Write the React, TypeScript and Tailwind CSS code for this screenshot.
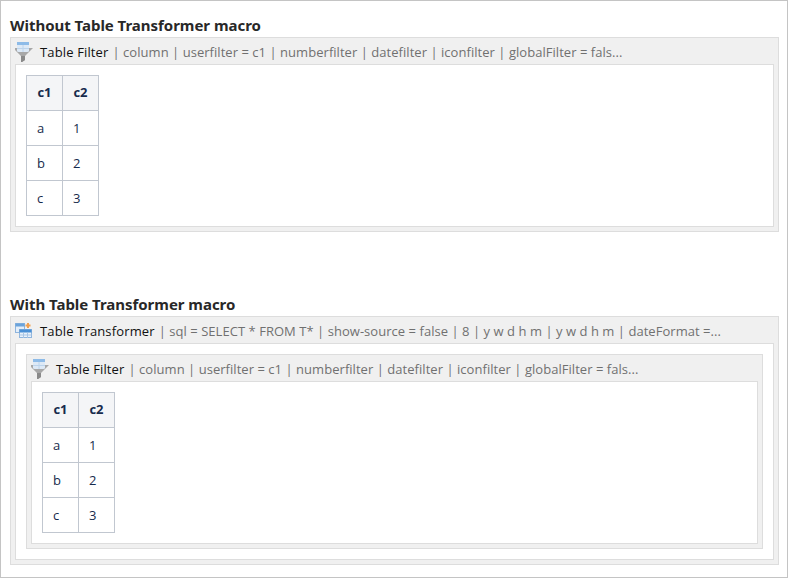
const FilterIcon = () => (
  <svg width="20" height="20" viewBox="0 0 20 20" className="shrink-0 -ml-[2px] -mt-[2px]">
    <path d="M0 6 H20 L12 14 V18 L9 20 H8 V14 Z" fill="#a8a8a8" />
    <path d="M8 14 H12 V18 L9 20 H8 Z" fill="#8a8a8a" />
    <rect x="4" y="0" width="12" height="10" rx="1.5" fill="#dde9f6" />
    <rect x="4" y="0" width="12" height="3" fill="#8dbbe8" />
    <path d="M4 6.5 H16 M10 3 V10" stroke="#bcd4ec" fill="none" />
  </svg>
);

const TransformerIcon = () => (
  <svg width="17" height="15" viewBox="0 0 17 15" className="shrink-0 -mt-[4px]">
    <rect x="0.5" y="0.5" width="9" height="9" fill="#e4eef9" stroke="#8fb5dd" />
    <rect x="0.5" y="0.5" width="9" height="3" fill="#6ba3db" />
    <rect x="4.5" y="6.5" width="12" height="8" fill="#eaf2fb" stroke="#8fb5dd" />
    <rect x="4.5" y="6.5" width="12" height="3" fill="#4a90d6" />
    <path d="M8.5 9.5 V15 M12.5 9.5 V15 M4.5 12 H16.5" stroke="#a9c6e6" fill="none" />
    <path d="M13 0 V5 M10.5 2.5 H15.5" stroke="#f0a050" strokeWidth="2" fill="none" />
  </svg>
);

const DataTable = () => {
  const rows = [
    ["a", "1"],
    ["b", "2"],
    ["c", "3"],
  ];
  return (
    <table className="border-collapse text-[13px] text-[#172b4d]">
      <thead>
        <tr>
          <th className="w-[36px] h-[35px] border border-[#c1c7d0] bg-[#f4f5f7] text-center font-bold p-0">c1</th>
          <th className="w-[36px] h-[35px] border border-[#c1c7d0] bg-[#f4f5f7] text-center font-bold p-0">c2</th>
        </tr>
      </thead>
      <tbody>
        {rows.map(([a, b]) => (
          <tr key={a}>
            <td className="w-[36px] h-[35px] border border-[#c1c7d0] pl-[10px] pt-[1px]">{a}</td>
            <td className="w-[36px] h-[35px] border border-[#c1c7d0] pl-[10px] pt-[1px]">{b}</td>
          </tr>
        ))}
      </tbody>
    </table>
  );
};

const Macro = ({
  icon,
  name,
  params,
  children,
}: {
  icon: React.ReactNode;
  name: string;
  params: string;
  children: React.ReactNode;
}) => (
  <div className="border border-[#dddddd] bg-[#f0f0f0] px-[4px] pb-[4px]">
    <div className="h-[26px] pt-[4px] flex items-center whitespace-nowrap text-[13px] text-[#707070] overflow-hidden">
      <span className="w-[25px] shrink-0 flex items-center justify-start">{icon}</span>
      <span className="text-[#111111] tracking-[0.14px]">{name}</span>
      <span className="ml-[4px] tracking-[0.04px]">{params}</span>
    </div>
    <div className="border border-[#dddddd] bg-white p-[10px]">{children}</div>
  </div>
);

const filterParams =
  "| column | userfilter = c1 | numberfilter | datefilter | iconfilter | globalFilter = fals...";

export default function App() {
  return (
    <div className="w-[788px] h-[578px] border border-[#c4c4c4] bg-white pl-[9px] pr-[8px] font-['Open_Sans',sans-serif]">
      <h2 className="mt-[14px] h-[20px] text-[15px] leading-[20px] font-bold text-[#282828] font-['Noto_Sans',sans-serif] tracking-[-0.03px]">
        Without Table Transformer macro
      </h2>
      <div className="mt-[2px]">
        <Macro icon={<FilterIcon />} name="Table Filter" params={filterParams}>
          <div className="h-[141px]">
            <DataTable />
          </div>
        </Macro>
      </div>
      <h2 className="mt-[62px] h-[20px] text-[15px] leading-[20px] font-bold text-[#282828] font-['Noto_Sans',sans-serif] tracking-[-0.03px]">
        With Table Transformer macro
      </h2>
      <div className="mt-[2px]">
        <Macro
          icon={<TransformerIcon />}
          name="Table Transformer"
          params="| sql = SELECT * FROM T* | show-source = false | 8 | y w d h m | y w d h m | dateFormat =..."
        >
          <Macro icon={<FilterIcon />} name="Table Filter" params={filterParams}>
            <div className="h-[141px]">
              <DataTable />
            </div>
          </Macro>
        </Macro>
      </div>
    </div>
  );
}
